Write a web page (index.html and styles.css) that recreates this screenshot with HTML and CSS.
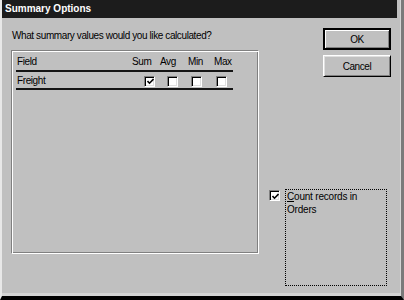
FILE: index.html
```html
<!DOCTYPE html>
<html lang="en">
<head>
    <meta charset="UTF-8">
    <title>Summary Options</title>
    <link rel="stylesheet" href="styles.css">
</head>
<body>
    <div class="window">
        <div class="titlebar">Summary Options</div>
        <div class="client">
            <div class="main">
                <div class="prompt">What summary values would you like calculated?</div>
                <div class="panel">
                    <div class="row head">
                        <span class="field">Field</span>
                        <span>Sum</span>
                        <span>Avg</span>
                        <span>Min</span>
                        <span>Max</span>
                    </div>
                    <div class="row">
                        <span class="field">Freight</span>
                        <span><span class="check cb-sum checked">
                            <svg width="7" height="7" viewBox="0 0 7 7"><polyline points="0.5,3 2.5,5.2 6.5,1" fill="none" stroke="#000" stroke-width="1.6"/></svg>
                        </span></span>
                        <span><span class="check cb-avg"></span></span>
                        <span><span class="check cb-min"></span></span>
                        <span><span class="check cb-max"></span></span>
                    </div>
                </div>
            </div>
            <div class="side">
                <button class="btn default">OK</button>
                <button class="btn">Cancel</button>
                <div class="count-option">
                    <span class="check checked">
                        <svg width="7" height="7" viewBox="0 0 7 7"><polyline points="0.5,3 2.5,5.2 6.5,1" fill="none" stroke="#000" stroke-width="1.6"/></svg>
                    </span>
                    <div class="count-label">Count records in Orders</div>
                </div>
            </div>
        </div>
    </div>
</body>
</html>
```

FILE: styles.css
```css
/* dialog window */
body {
    margin: 0;
    background-color: #c0c0c0;
    font-family: "Liberation Sans", Arial, sans-serif;
    font-size: 10px;
    letter-spacing: -0.4px;
    color: #000;
}
.window {
    box-sizing: border-box;
    width: 404px;
    height: 300px;
    display: flex;
    flex-direction: column;
    background-color: #c0c0c0;
    border-left: 2px solid #e8e8e8;
    border-right: 3px solid #7a7a7a;
    border-bottom: 4px solid #000;
    box-shadow: inset -1px -3px 0 #d4d4d4;
}
.titlebar {
    height: 18px;
    line-height: 17px;
    padding-left: 3px;
    margin-right: 4px;
    background-color: #1c1c1c;
    color: #fff;
    font-weight: bold;
    letter-spacing: 0;
}
.client {
    flex: 1;
    display: flex;
    padding: 10px 0 10px 9px;
}
/* left side */
.main {
    width: 248px;
}
.prompt {
    line-height: 12px;
    margin-top: 2px;
    margin-left: 1px;
}
.panel {
    box-sizing: border-box;
    height: 204px;
    margin-top: 8px;
    padding: 0 0 0 4px;
    border: 1px solid;
    border-color: #808080 #fff #fff #808080;
    box-shadow: inset 1px 1px 0 #fff, inset -1px -1px 0 #808080;
}
.row {
    display: grid;
    grid-template-columns: 116px 28px 28px 26px 19px;
    align-items: center;
    width: 217px;
    line-height: 12px;
    padding: 3px 0 1px;
    border-bottom: 2px solid #141414;
}
.row.head {
    padding: 5px 0 2px;
}
.field {
    padding-left: 1px;
}
/* checkboxes */
.check {
    box-sizing: border-box;
    width: 11px;
    height: 11px;
    display: flex;
    align-items: center;
    justify-content: center;
    background-color: #fff;
    border: 1px solid;
    border-color: #808080 #fff #fff #808080;
    box-shadow: inset 1px 1px 0 #000, inset -1px -1px 0 #dfdfdf;
}
.check svg {
    margin: 1px 0 0 1px;
}
.cb-sum { margin-left: 12px; }
.cb-avg { margin-left: 7px; }
.cb-min { margin-left: 3px; }
.cb-max { margin-left: 2px; }
/* right side */
.side {
    flex: 1;
    display: flex;
    flex-direction: column;
    padding-left: 10px;
}
.btn {
    box-sizing: border-box;
    align-self: flex-end;
    width: 68px;
    height: 22px;
    margin-right: 10px;
    padding: 0;
    font-family: inherit;
    font-size: 10px;
    letter-spacing: -0.4px;
    color: #000;
    background-color: #c0c0c0;
    border: 1px solid;
    border-color: #fff #000 #000 #fff;
    box-shadow: inset 1px 1px 0 #dfdfdf, inset -1px -1px 0 #808080;
}
.btn.default {
    border: 2px solid #000;
    box-shadow: inset 1px 1px 0 #fff, inset -1px -1px 0 #808080;
}
.btn + .btn {
    margin-top: 5px;
}
.count-option {
    margin-top: auto;
    display: flex;
    align-items: flex-start;
    gap: 5px;
}
.count-option .check {
    margin-top: 1px;
}
.count-label {
    box-sizing: border-box;
    width: 102px;
    height: 97px;
    padding: 0 4px 0 1px;
    line-height: 13px;
    letter-spacing: -0.2px;
    border: 1px dotted #000;
}
.count-label::first-letter {
    text-decoration: underline;
}
```
